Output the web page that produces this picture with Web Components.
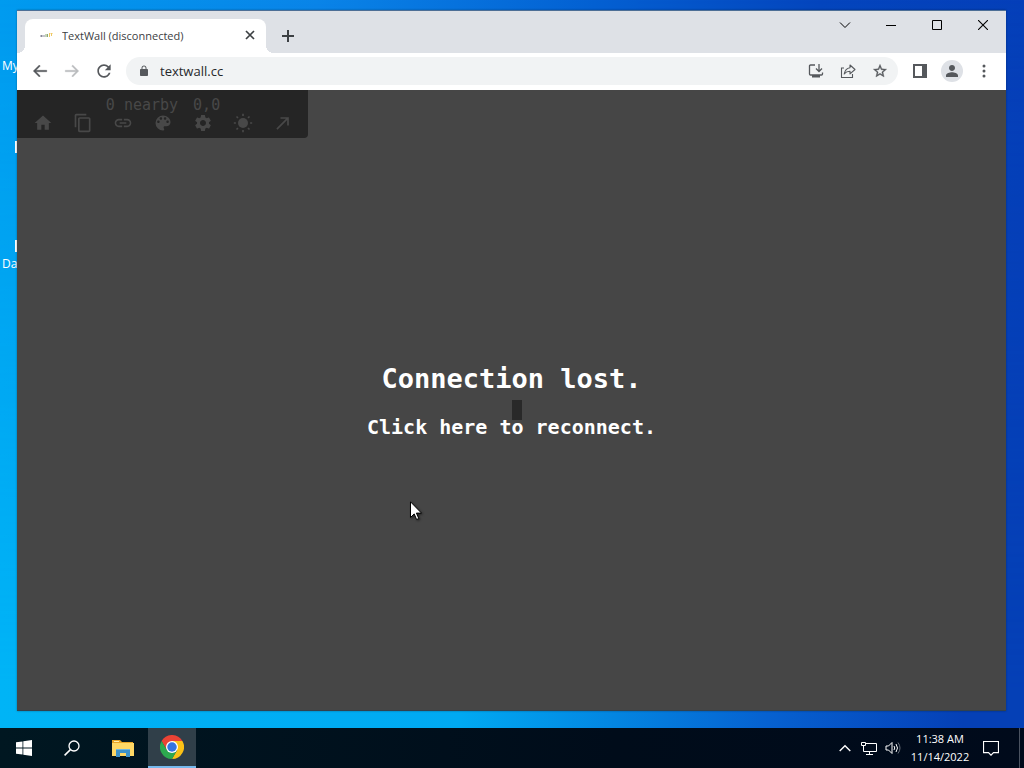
<!DOCTYPE html>
<html lang="en">
<head>
<meta charset="utf-8">
<title>TextWall (disconnected)</title>
<style>
  html, body {
    height: 100%;
    margin: 0;
    overflow: hidden;
  }
  body {
    font-family: "Open Sans", "Noto Sans", sans-serif;
    font-size: 12px;
  }
</style>
</head>
<body>
<desk-top>
  <desk-label slot="labels" style="--row: 60px">My</desk-label>
  <desk-mark slot="labels" style="--row: 141px"></desk-mark>
  <desk-mark slot="labels" style="--row: 240px"></desk-mark>
  <desk-label slot="labels" style="--row: 258px">Da</desk-label>
  <browser-window>
    <browser-tabs slot="tabs">TextWall (disconnected)</browser-tabs>
    <browser-bar slot="bar" address="textwall.cc"></browser-bar>
    <wall-page></wall-page>
  </browser-window>
  <task-bar slot="taskbar"></task-bar>
</desk-top>

<script>
// icons, keyed by name: [viewBox, content]
const ICONS = {
  close: ['0 0 10 10', '<path d="M1 1l8 8M9 1L1 9" fill="none" stroke="currentColor" stroke-width="1.7"/>'],
  plus: ['0 0 12 12', '<path d="M6 0v12M0 6h12" fill="none" stroke="currentColor" stroke-width="2"/>'],
  back: ['0 0 24 24', '<path d="M21 11H6.8l5.6-5.6L11 4l-8 8 8 8 1.4-1.4L6.8 13H21z" stroke="currentColor" stroke-width=".5"/>'],
  forward: ['0 0 24 24', '<path d="M3 11h14.2l-5.6-5.6L13 4l8 8-8 8-1.4-1.4 5.6-5.6H3z" stroke="currentColor" stroke-width=".5"/>'],
  reload: ['0 0 24 24', '<path d="M17.65 6.35C16.2 4.9 14.21 4 12 4c-4.42 0-7.99 3.58-7.99 8s3.57 8 7.99 8c3.73 0 6.84-2.55 7.73-6h-2.08c-.82 2.33-3.04 4-5.65 4-3.31 0-6-2.69-6-6s2.69-6 6-6c1.66 0 3.14.69 4.22 1.78L13 11h7V4l-2.35 2.35z"/>'],
  lock: ['0 0 24 24', '<path d="M18 8h-1V6c0-2.76-2.24-5-5-5S7 3.24 7 6v2H6c-1.1 0-2 .9-2 2v10c0 1.1.9 2 2 2h12c1.1 0 2-.9 2-2V10c0-1.1-.9-2-2-2zM8.9 6c0-1.71 1.39-3.1 3.1-3.1s3.1 1.39 3.1 3.1v2H8.9V6z"/>'],
  install: ['0 0 16 16', '<path d="M7 2H2.5a1 1 0 0 0-1 1v8a1 1 0 0 0 1 1h11a1 1 0 0 0 1-1V9.500M11 1v7M8 5.500l3 3 3-3" fill="none" stroke="currentColor" stroke-width="1.3"/><path d="M4 12h8v2.5H4z"/>'],
  share: ['0 0 16 16', '<path d="M4 5H1.5v9.500h11V11" fill="none" stroke="currentColor" stroke-width="1.1"/><path d="M10 2l5 4.500-5 4.300V8.300c-2.500 0-4.300.8-5.800 2.700.6-3.300 2.400-5.800 5.800-6.300z" fill="none" stroke="currentColor" stroke-width="1.1" stroke-linejoin="round"/>'],
  star: ['0 0 24 24', '<path d="M22 9.240l-7.190-.62L12 2 9.190 8.630 2 9.240l5.460 4.730L5.820 21 12 17.270 18.180 21l-1.630-7.030L22 9.240zM12 15.400l-3.760 2.270 1-4.280-3.320-2.880 4.380-.38L12 6.100l1.710 4.040 4.380.38-3.320 2.880 1 4.280L12 15.400z" stroke="currentColor" stroke-width=".5"/>'],
  panel: ['0 0 14 14', '<path d="M0 0h14v14H0zM2 2v10h7V2z" fill-rule="evenodd"/>'],
  person: ['0 0 24 24', '<path d="M12 12c2.5 0 4.500-2 4.500-4.500S14.500 3 12 3 7.500 5 7.500 7.500 9.500 12 12 12zm0 2c-3.300 0-9 1.600-9 4.700V21h18v-2.300c0-3.100-5.700-4.700-9-4.700z"/>'],
  dots: ['0 0 14 14', '<circle cx="7" cy="2" r="1.5"/><circle cx="7" cy="7" r="1.5"/><circle cx="7" cy="12" r="1.5"/>'],
  chevron: ['0 0 12 12', '<path d="M1 3.500l5 5 5-5" fill="none" stroke="currentColor"/>'],
  minimize: ['0 0 10 10', '<path d="M0 5h10v1H0z"/>'],
  maximize: ['0 0 10 10', '<path d="M.5.5h9v9h-9z" fill="none" stroke="currentColor"/>'],
  cross: ['0 0 10 10', '<path d="M0 0l10 10M10 0L0 10" fill="none" stroke="currentColor" stroke-width="1.1"/>'],
  home: ['0 0 24 24', '<path d="M10 20v-6h4v6h5v-8h3L12 3 2 12h3v8z"/>'],
  copy: ['0 0 24 24', '<path d="M16 1H4c-1.1 0-2 .9-2 2v14h2V3h12V1zm3 4H8c-1.1 0-2 .9-2 2v14c0 1.1.9 2 2 2h11c1.1 0 2-.9 2-2V7c0-1.1-.9-2-2-2zm0 16H8V7h11v14z"/>'],
  link: ['0 0 24 24', '<path d="M3.900 12c0-1.710 1.390-3.100 3.100-3.100h4V7H7c-2.760 0-5 2.240-5 5s2.240 5 5 5h4v-1.900H7c-1.710 0-3.100-1.390-3.100-3.100zM8 13h8v-2H8v2zm9-6h-4v1.900h4c1.710 0 3.100 1.390 3.100 3.100s-1.390 3.100-3.100 3.100h-4V17h4c2.760 0 5-2.240 5-5s-2.240-5-5-5z"/>'],
  palette: ['0 0 24 24', '<path d="M12 3a9 9 0 0 0 0 18c.83 0 1.5-.67 1.5-1.5 0-.39-.15-.74-.39-1.010-.23-.26-.38-.61-.38-.99 0-.83.67-1.5 1.5-1.5H16c2.760 0 5-2.240 5-5 0-4.420-4.030-8-9-8zm-5.500 9c-.83 0-1.5-.67-1.5-1.5S5.670 9 6.500 9 8 9.670 8 10.500 7.330 12 6.500 12zm3-4C8.670 8 8 7.330 8 6.500S8.670 5 9.500 5s1.5.67 1.5 1.5S10.330 8 9.500 8zm5 0c-.83 0-1.5-.67-1.5-1.5S13.670 5 14.500 5s1.5.67 1.5 1.5S15.330 8 14.500 8zm3 4c-.83 0-1.5-.67-1.5-1.5S16.670 9 17.500 9s1.5.67 1.5 1.5-.67 1.5-1.5 1.5z"/>'],
  gear: ['0 0 24 24', '<path d="M19.140 12.940c.04-.3.06-.61.06-.94 0-.32-.02-.64-.07-.94l2.030-1.580c.18-.14.23-.41.12-.61l-1.920-3.320c-.12-.22-.37-.29-.59-.22l-2.390.96c-.5-.38-1.030-.7-1.620-.94l-.36-2.540c-.04-.24-.24-.41-.48-.41h-3.840c-.24 0-.43.17-.47.41l-.36 2.540c-.59.24-1.130.57-1.620.94l-2.390-.96c-.22-.08-.47 0-.59.22L2.740 8.870c-.12.21-.08.47.12.61l2.030 1.580c-.05.3-.09.63-.09.94s.02.64.07.94l-2.030 1.580c-.18.14-.23.41-.12.61l1.920 3.320c.12.22.37.29.59.22l2.390-.96c.5.38 1.030.7 1.620.94l.36 2.540c.05.24.24.41.48.41h3.840c.24 0 .44-.17.47-.41l.36-2.540c.59-.24 1.130-.56 1.620-.94l2.390.96c.22.08.47 0 .59-.22l1.920-3.320c.12-.22.07-.47-.12-.61l-2.010-1.580zM12 15.600c-1.980 0-3.600-1.620-3.600-3.600s1.620-3.600 3.600-3.600 3.600 1.620 3.600 3.600-1.620 3.600-3.600 3.600z"/>'],
  sun: ['0 0 24 24', '<circle cx="12" cy="12" r="6"/><path d="M12 1v2.500M12 20.500V23M1 12h2.500M20.500 12H23M4.200 4.200L6 6M18 18l1.800 1.800M4.200 19.800L6 18M18 6l1.800-1.800" stroke="currentColor" stroke-width="2"/>'],
  outward: ['0 0 24 24', '<path d="M9 5v2h6.590L4 18.590 5.410 20 17 8.410V15h2V5z"/>'],
  windows: ['0 0 16 16', '<path d="M0 2.300l6.500-.9v6.200H0zM7.300 1.300L16 0v7.600H7.300zM0 8.400h6.500v6.200L0 13.700zM7.300 8.400H16V16l-8.700-1.300z"/>'],
  search: ['0 0 16 16', '<circle cx="10" cy="6" r="5" fill="none" stroke="currentColor" stroke-width="1.3"/><path d="M6.400 9.600L.6 15.400" stroke="currentColor" stroke-width="1.5"/>'],
  folder: ['0 0 22 18', '<path d="M0 1h8l2 2h11v5H0z" fill="#e8a526"/><path d="M2 2h5v1H2z" fill="#fff0b0"/><path d="M0 4h22v13H0z" fill="#ffd865"/><path d="M4 10h14v8h-4v-4H8v4H4z" fill="#3d92c9"/><path d="M4 10h14v1H4z" fill="#72b7df"/>'],
  chrome: ['0 0 48 48', '<path d="M24 24V12h20.800A24 24 0 0 1 24 48l10.400-18z" fill="#fbc116"/><path d="M3.200 12A24 24 0 0 1 44.800 12H24L13.600 30z" fill="#ea4335"/><path d="M3.200 12l10.400 18L24 36l10.400-6L24 48A24 24 0 0 1 3.200 12z" fill="#2da94f"/><circle cx="24" cy="24" r="12" fill="#fff"/><circle cx="24" cy="24" r="9.500" fill="#3474e0"/>'],
  up: ['0 0 12 12', '<path d="M.7 9L6 3.700 11.300 9" fill="none" stroke="currentColor" stroke-width="1.4"/>'],
  network: ['0 0 18 16', '<path d="M6 3.500h10.500v8h-13v-4M9.500 11.500v3M6 14.500h7M1.500 2.500h4v3h-4zM3.500 5.500v3" fill="none" stroke="currentColor"/>'],
  sound: ['0 0 16 16', '<path d="M1 6h2.500L7 2.500v11L3.500 10H1z" fill="none" stroke="currentColor"/><path d="M9 6q1.500 2 0 4M11 4q3 4 0 8" fill="none" stroke="currentColor"/><path d="M13 2.500q4 5.500 0 11" fill="none" stroke="#666d78"/>'],
  notice: ['0 0 16 16', '<path d="M.5 1.500h15v11.200h-5L8 15.200l-2.500-2.500h-5z" fill="none" stroke="currentColor" stroke-width="1.2"/>'],
  pointer: ['0 0 12 20', '<path d="M.5.8v15.700l3.700-3.600 2.400 5.600 2.200-1-2.400-5.400h5.100z" fill="#fff" stroke="#000"/>'],
  favicon: ['0 0 14 6', '<path d="M1 4h5M2.500 3v2" stroke="#889" stroke-width="1"/><path d="M7 2v3M8.500 2v3" stroke="#8aa873" stroke-width="1"/><path d="M10.500 1v4M12.500 1v3M11.500 1.500h2" stroke="#efc862" stroke-width="1"/>']
};

// every element gets an open root filled from its markup
class BaseElement extends HTMLElement {
  constructor() {
    super();
    const template = document.createElement('template');
    template.innerHTML = this.markup();
    this.root = this.attachShadow({mode: 'open'});
    this.root.appendChild(template.content.cloneNode(true));
  }
}

class UiIcon extends BaseElement {
  markup() {
    const [box, content] = ICONS[this.getAttribute('name')];
    return `
    <style>
      :host {
        display: block;
        flex: none;
        height: var(--h, var(--size, 16px));
        width: var(--size, 16px);
      }
      svg {
        display: block;
        fill: currentColor;
        height: 100%;
        width: 100%;
      }
    </style>
    <svg viewBox="${box}" aria-hidden="true">${content}</svg>`;
  }
}

const BUTTON = `
      button {
        align-items: center;
        background: none;
        border: none;
        color: inherit;
        display: flex;
        flex: none;
        font: inherit;
        justify-content: center;
        padding: 0;
      }`;

class DeskTop extends BaseElement {
  markup() {
    return `
    <style>
      :host {
        background: linear-gradient(90deg, #009bef 0%, #0a84e8 31%, #0460d2 58%, #0445bd 80%, #053fb9 100%);
        display: grid;
        grid-template-rows: 1fr 40px;
        height: 100vh;
        position: relative;
      }
      /* brighter light towards the bottom left */
      :host::before {
        background: linear-gradient(90deg, #00b4f6 0%, #00a9f2 45%, #0661d0 75%, #0540b6 94%);
        content: '';
        inset: 0;
        mask-image: linear-gradient(transparent, black 90%);
        position: absolute;
      }
      main {
        display: flex;
        min-height: 0;
        padding: 10px 18px 17px 17px;
        position: relative;
      }
    </style>
    <slot name="labels"></slot>
    <main><slot></slot></main>
    <slot name="taskbar"></slot>`;
  }
}

class DeskLabel extends BaseElement {
  markup() {
    return `
    <style>
      :host {
        color: white;
        font-size: 12px;
        left: 2px;
        line-height: 12px;
        position: absolute;
        top: var(--row);
      }
    </style>
    <slot></slot>`;
  }
}

class DeskMark extends BaseElement {
  markup() {
    return `
    <style>
      :host {
        background: white;
        height: 12px;
        left: 15px;
        position: absolute;
        top: var(--row);
        width: 2px;
      }
    </style>`;
  }
}

class BrowserWindow extends BaseElement {
  markup() {
    return `
    <style>
      :host {
        border-bottom: 1px solid #32414d;
        border-top: 1px solid #4d6f96;
        box-shadow: 0 0 2px rgb(0,0,0,0.35);
        box-sizing: border-box;
        display: flex;
        flex: 1;
        flex-direction: column;
        min-width: 0;
      }
    </style>
    <slot name="tabs"></slot>
    <slot name="bar"></slot>
    <slot></slot>`;
  }
}

class BrowserTabs extends BaseElement {
  markup() {
    return `
    <style>
      :host {
        align-items: flex-end;
        background: #dee1e6;
        color: #3c4043;
        display: flex;
        height: 42px;
        padding-left: 8px;
      }
      ${BUTTON}
      .tab {
        align-items: center;
        background: white;
        border-radius: 8px 8px 0 0;
        box-sizing: border-box;
        display: flex;
        gap: 9px;
        height: 34px;
        padding: 0 11px 2px 14px;
        position: relative;
        width: 241px;
      }
      /* flared feet of the active tab */
      .tab::before, .tab::after {
        bottom: 0;
        content: '';
        height: 8px;
        position: absolute;
        width: 8px;
      }
      .tab::before {
        background: radial-gradient(circle at 0 0, #dee1e6 8px, white 8px);
        left: -8px;
      }
      .tab::after {
        background: radial-gradient(circle at 100% 0, #dee1e6 8px, white 8px);
        right: -8px;
      }
      .title {
        flex: 1;
        font-size: 11px;
        overflow: hidden;
        white-space: nowrap;
      }
      .add {
        height: 34px;
        margin-left: 14px;
        width: 16px;
      }
      .controls {
        align-self: flex-start;
        color: black;
        display: flex;
        margin-left: auto;
      }
      .controls button {
        height: 28px;
        width: 46px;
      }
    </style>
    <div class="tab">
      <ui-icon name="favicon" style="--size: 14px; --h: 6px"></ui-icon>
      <span class="title"><slot></slot></span>
      <button aria-label="Close tab"><ui-icon name="close" style="--size: 10px"></ui-icon></button>
    </div>
    <button class="add" aria-label="New tab"><ui-icon name="plus" style="--size: 12px"></ui-icon></button>
    <div class="controls">
      <button aria-label="Search tabs"><ui-icon name="chevron" style="--size: 12px"></ui-icon></button>
      <button aria-label="Minimize"><ui-icon name="minimize" style="--size: 10px"></ui-icon></button>
      <button aria-label="Maximize"><ui-icon name="maximize" style="--size: 10px"></ui-icon></button>
      <button aria-label="Close"><ui-icon name="cross" style="--size: 10px"></ui-icon></button>
    </div>`;
  }
}

class BrowserBar extends BaseElement {
  markup() {
    return `
    <style>
      :host {
        align-items: center;
        background: white;
        box-sizing: border-box;
        color: #55585c;
        display: flex;
        height: 37px;
        padding: 0 6px 1px 7px;
      }
      ${BUTTON}
      button {
        height: 28px;
        width: 32px;
      }
      .forward {
        color: #babcbe;
      }
      .address {
        align-items: center;
        background: #f1f3f4;
        border-radius: 14px;
        display: flex;
        flex: 1;
        height: 28px;
        margin: 0 6px;
        padding: 0 2px 0 12px;
      }
      input {
        background: none;
        border: none;
        color: #26282b;
        flex: 1;
        font: 13px "Open Sans", "Noto Sans", sans-serif;
        min-width: 0;
        outline: none;
        padding: 0 10px;
      }
      .avatar {
        background: #dee1e6;
        border-radius: 50%;
        height: 22px;
        margin: 0 5px;
        width: 22px;
      }
    </style>
    <button aria-label="Back"><ui-icon name="back" style="--size: 18px"></ui-icon></button>
    <button class="forward" aria-label="Forward"><ui-icon name="forward" style="--size: 18px"></ui-icon></button>
    <button aria-label="Reload"><ui-icon name="reload" style="--size: 20px"></ui-icon></button>
    <div class="address">
      <ui-icon name="lock" style="--size: 12px"></ui-icon>
      <input type="text" aria-label="Address" value="${this.getAttribute('address')}">
      <button aria-label="Install"><ui-icon name="install"></ui-icon></button>
      <button aria-label="Share"><ui-icon name="share"></ui-icon></button>
      <button aria-label="Bookmark"><ui-icon name="star"></ui-icon></button>
    </div>
    <button aria-label="Side panel"><ui-icon name="panel" style="--size: 14px"></ui-icon></button>
    <button class="avatar" aria-label="Profile"><ui-icon name="person"></ui-icon></button>
    <button aria-label="Menu"><ui-icon name="dots" style="--size: 14px"></ui-icon></button>`;
  }
}

class WallMenu extends BaseElement {
  markup() {
    return `
    <style>
      :host {
        background: #252525;
        border-radius: 0 0 4px 0;
        color: #484848;
        display: block;
        font: 15px/16px "DejaVu Sans Mono", monospace;
        left: 0;
        padding: 7px 5px 5px 6px;
        position: absolute;
        top: 0;
      }
      ${BUTTON}
      button {
        height: 20px;
        width: 40px;
      }
      .stats {
        display: flex;
        gap: 15px;
        justify-content: center;
      }
      .tools {
        display: flex;
      }
    </style>
    <div class="stats"><span>0 nearby</span><span>0,0</span></div>
    <div class="tools">
      ${['home', 'copy', 'link', 'palette', 'gear', 'sun', 'outward'].map(name =>
        `<button aria-label="${name}"><ui-icon name="${name}" style="--size: 20px"></ui-icon></button>`).join('')}
    </div>`;
  }
}

class WallPage extends BaseElement {
  markup() {
    return `
    <style>
      :host {
        align-items: center;
        background: #464646;
        color: white;
        display: flex;
        flex: 1;
        flex-direction: column;
        font-family: "DejaVu Sans Mono", monospace;
        gap: 18px;
        justify-content: center;
        position: relative;
      }
      ${BUTTON}
      h1 {
        font-size: 27px;
        line-height: 36px;
        margin: 0;
        position: relative;
      }
      button {
        font-size: 20px;
        font-weight: bold;
        line-height: 24px;
        position: relative;
      }
      .cell {
        background: #292929;
        height: 20px;
        left: 50%;
        position: absolute;
        top: 50%;
        width: 10px;
      }
      .pointer {
        filter: drop-shadow(1px 1px 1px rgb(0,0,0,0.5));
        left: 393px;
        position: absolute;
        top: 411px;
      }
    </style>
    <wall-menu></wall-menu>
    <div class="cell"></div>
    <h1>Connection lost.</h1>
    <button>Click here to reconnect.</button>
    <ui-icon class="pointer" name="pointer" style="--size: 12px; --h: 20px"></ui-icon>`;
  }
}

class TaskBar extends BaseElement {
  markup() {
    return `
    <style>
      :host {
        background: linear-gradient(90deg, #001721, #000c1a 60%, #000a1b);
        color: white;
        display: flex;
        justify-content: space-between;
        position: relative;
      }
      ${BUTTON}
      nav, .tray {
        display: flex;
      }
      nav button {
        width: 48px;
      }
      .files {
        margin: 0 1px 0 3px;
      }
      nav .active {
        background: #303f49;
        border-bottom: 2px solid #76b9ed;
      }
      .tray button {
        width: 24px;
      }
      .tray .clock {
        font-size: 11px;
        line-height: 18px;
        text-align: center;
        width: 70px;
      }
      .tray .notice {
        border-right: 1px solid #4a5260;
        padding-right: 12px;
        width: 45px;
      }
      .tray {
        padding-right: 4px;
      }
    </style>
    <nav>
      <button aria-label="Start"><ui-icon name="windows"></ui-icon></button>
      <button aria-label="Search"><ui-icon name="search"></ui-icon></button>
      <button class="files" aria-label="File Explorer"><ui-icon name="folder" style="--size: 22px; --h: 18px"></ui-icon></button>
      <button class="active" aria-label="Chrome"><ui-icon name="chrome" style="--size: 24px"></ui-icon></button>
    </nav>
    <div class="tray">
      <button aria-label="Show hidden icons"><ui-icon name="up" style="--size: 12px"></ui-icon></button>
      <button aria-label="Network"><ui-icon name="network" style="--size: 18px; --h: 16px"></ui-icon></button>
      <button aria-label="Volume"><ui-icon name="sound"></ui-icon></button>
      <button class="clock"><span>11:38 AM<br>11/14/2022</span></button>
      <button class="notice" aria-label="Notifications"><ui-icon name="notice"></ui-icon></button>
    </div>`;
  }
}

customElements.define('ui-icon', UiIcon);
customElements.define('desk-top', DeskTop);
customElements.define('desk-label', DeskLabel);
customElements.define('desk-mark', DeskMark);
customElements.define('browser-window', BrowserWindow);
customElements.define('browser-tabs', BrowserTabs);
customElements.define('browser-bar', BrowserBar);
customElements.define('wall-menu', WallMenu);
customElements.define('wall-page', WallPage);
customElements.define('task-bar', TaskBar);
</script>
</body>
</html>
